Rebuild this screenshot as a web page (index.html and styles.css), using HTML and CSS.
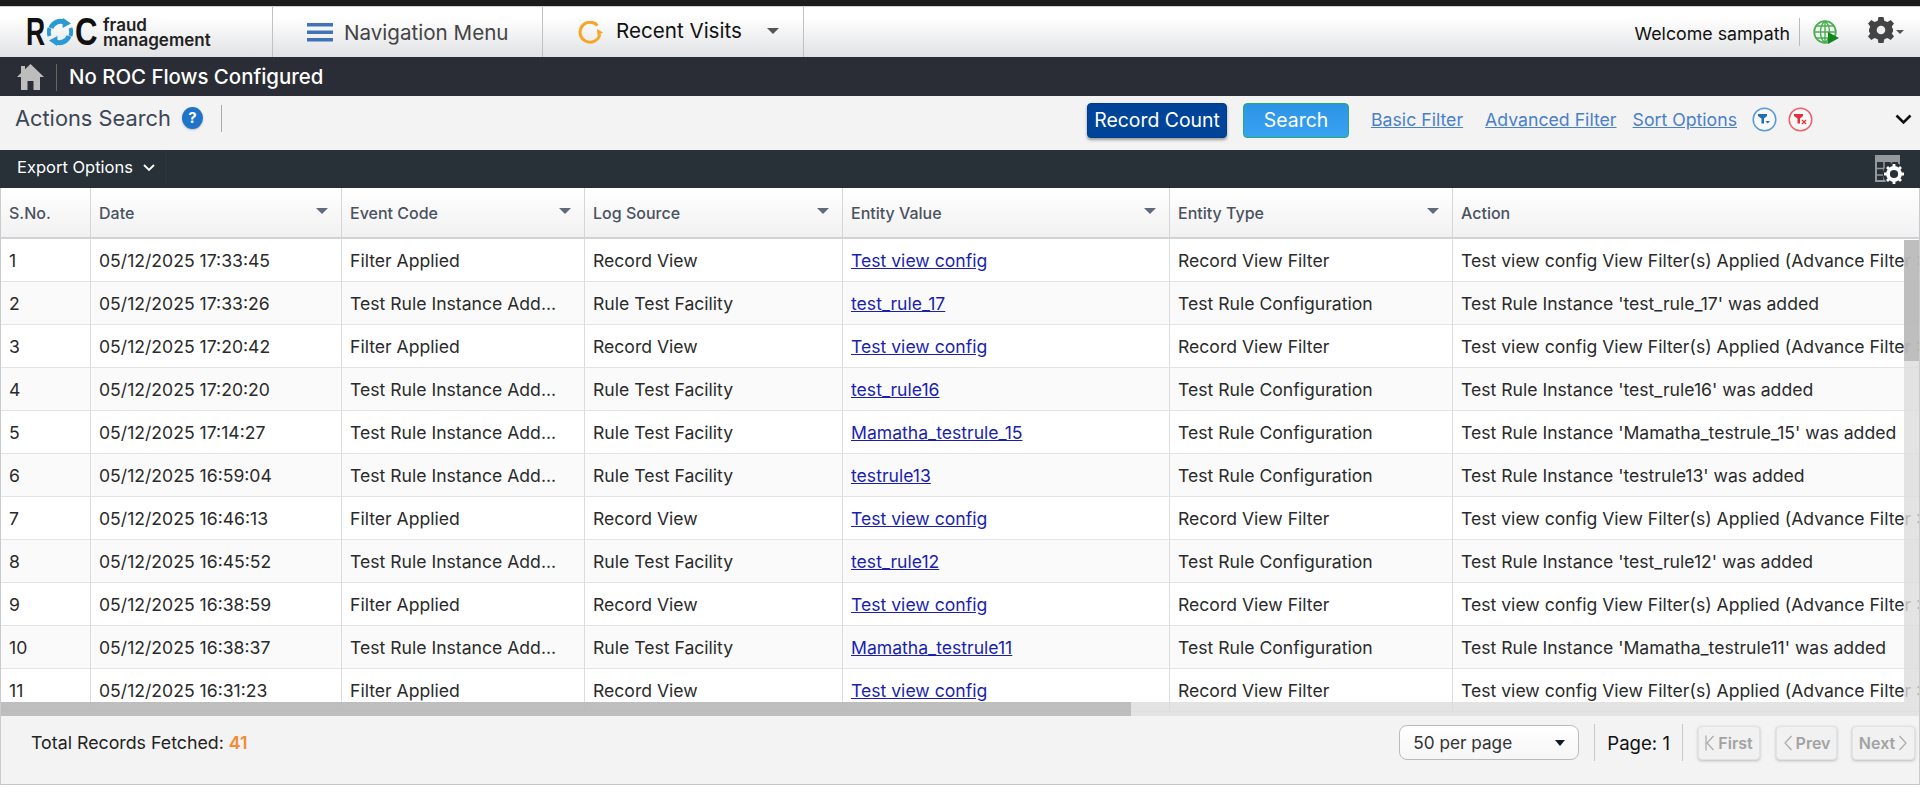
FILE: index.html
```html
<!DOCTYPE html>
<html>

<head>
    <meta name="viewport" content="width=device-width, initial-scale=1.0">
    <title>Actions Search</title>
    <link rel="stylesheet" href="styles.css">
</head>

<body>
    <div class="topline"></div>

    <header class="header">
        <div class="logo">
            <span class="logo-r">R</span>
            <svg class="logo-o" viewBox="0 0 26 28">
                <path d="M4 10A10 10 0 0 1 18 4.500" fill="none" stroke="#2a9ad6" stroke-width="5"/>
                <path d="M16 0L24 5.500L15.500 10Z" fill="#2a9ad6"/>
                <path d="M22 18A10 10 0 0 1 8 23.500" fill="none" stroke="#2a9ad6" stroke-width="5"/>
                <path d="M10 28L2 22.500L10.500 18Z" fill="#2a9ad6"/>
                <path d="M2.600 18A11 11 0 0 1 2.600 10M23.400 10A11 11 0 0 1 23.400 18" fill="none" stroke="#2a9ad6" stroke-width="4"/>
            </svg>
            <span class="logo-c">C</span>
            <span class="logo-text">fraud<br>management</span>
        </div>
        <div class="nav-item nav-menu">
            <svg class="hamburger" viewBox="0 0 26 19">
                <rect y="0" width="26" height="3.500" fill="#3f72b8"/>
                <rect y="7.500" width="26" height="3.500" fill="#3f72b8"/>
                <rect y="15" width="26" height="3.500" fill="#3f72b8"/>
            </svg>
            Navigation Menu
        </div>
        <div class="nav-item nav-recent">
            <svg class="recent-icon" viewBox="0 0 25 23">
                <path d="M19.500 4.500A10 10 0 1 0 21.800 13.500" fill="none" stroke="#f6a623" stroke-width="3"/>
                <path d="M19 8L25 11.500L19.500 14.500Z" fill="#f6a623"/>
            </svg>
            <span class="recent-text">Recent Visits</span>
            <span class="caret"></span>
        </div>
        <div class="header-right">
            <span class="welcome">Welcome sampath</span>
            <span class="vline"></span>
            <svg class="globe" viewBox="0 0 26 25">
                <circle cx="12" cy="12" r="10.800" fill="none" stroke="#4aae52" stroke-width="1.800"/>
                <path d="M1 12H23M3 6H21M3 18H21M12 1V23M12 1C6 6 6 18 12 23M12 1C18 6 18 18 12 23" fill="none" stroke="#4aae52" stroke-width="1.400"/>
                <path d="M15 12L26 18L15 24Z" fill="#12851c"/>
            </svg>
            <svg class="gear" viewBox="0 0 26 26">
                <path d="M10.500 0H15.500L16.300 3.700L19.500 5L22.700 3L26 6.500L23.800 9.600L25 12.500V14.500L23.800 16.400L26 19.500L22.700 23L19.500 21L16.300 22.300L15.500 26H10.500L9.700 22.300L6.500 21L3.300 23L0 19.500L2.200 16.400L1 14.500V12.500L2.200 9.600L0 6.500L3.300 3L6.500 5L9.700 3.700Z" fill="#444"/>
                <circle cx="13" cy="13" r="4.300" fill="#eeeff0"/>
            </svg>
            <span class="caret caret-small"></span>
        </div>
    </header>

    <div class="flowbar">
        <svg class="home" viewBox="0 0 27 26">
            <path d="M13.500 0L27 13H23V26H16.500V17H10.500V26H4V13H0L4 9V2H8V5.200Z" fill="#bdbdbd"/>
        </svg>
        <span class="flowbar-line"></span>
        <span class="flow-title">No ROC Flows Configured</span>
    </div>

    <div class="actionbar">
        <div class="page-title">
            <span>Actions Search</span>
            <span class="help">?</span>
            <span class="title-line"></span>
        </div>
        <div class="actions">
            <button class="btn btn-count">Record Count</button>
            <button class="btn btn-search">Search</button>
            <a class="filter-link link-basic" href="#">Basic Filter</a>
            <a class="filter-link link-advanced" href="#">Advanced Filter</a>
            <a class="filter-link link-sort" href="#">Sort Options</a>
            <svg class="filter-icon icon-blue" viewBox="0 0 25 25">
                <circle cx="12.500" cy="12.500" r="11.300" fill="#f8f8f8" stroke="#5a9bd5" stroke-width="1.500"/>
                <path d="M6 7H15V9L12 11.500V16.500H9.500V11.500L6 9Z" fill="#1d6fb5"/>
                <path d="M13.500 14H18L15.700 16.500Z" fill="#1d6fb5"/>
            </svg>
            <svg class="filter-icon icon-red" viewBox="0 0 25 25">
                <circle cx="12.500" cy="12.500" r="11.300" fill="#f8f8f8" stroke="#f0606a" stroke-width="1.500"/>
                <path d="M6 7H15V9L12 11.500V16.500H9.500V11.500L6 9Z" fill="#e0303c"/>
                <path d="M14 13L18 17M18 13L14 17" stroke="#e0303c" stroke-width="1.300"/>
            </svg>
            <svg class="chevron-dark" viewBox="0 0 17 11">
                <path d="M1.500 1.500L8.500 8.500L15.500 1.500" fill="none" stroke="#111" stroke-width="2.600"/>
            </svg>
        </div>
    </div>

    <div class="exportbar">
        <div class="export-btn">
            Export Options
            <svg class="export-chevron" viewBox="0 0 12 8">
                <path d="M1 1L6 6L11 1" fill="none" stroke="#fff" stroke-width="1.800"/>
            </svg>
        </div>
        <svg class="grid-gear" viewBox="0 0 30 29">
            <rect x="1" y="1" width="23" height="25" fill="none" stroke="#95999c" stroke-width="2"/>
            <rect x="1" y="1" width="23" height="6" fill="#95999c"/>
            <path d="M9 7V26M16.500 7V26M1 13.500H24M1 20H24" stroke="#95999c" stroke-width="1.500"/>
            <circle cx="19" cy="19" r="11" fill="#283038"/>
            <circle cx="19" cy="19" r="6" fill="none" stroke="#fff" stroke-width="3.800"/>
            <path d="M19 9V12M19 26V29M9 19H12M26 19H29M12 12L14 14M24 24L26 26M26 12L24 14M14 24L12 26" stroke="#fff" stroke-width="2.800"/>
        </svg>
    </div>

    <div class="panel">
        <div class="table-wrap">
            <table class="grid">
                <colgroup>
                    <col class="col-sno">
                    <col class="col-date">
                    <col class="col-event">
                    <col class="col-source">
                    <col class="col-value">
                    <col class="col-type">
                    <col class="col-action">
                </colgroup>
                <thead>
                    <tr>
                        <th>S.No.</th>
                        <th class="sortable">Date</th>
                        <th class="sortable">Event Code</th>
                        <th class="sortable">Log Source</th>
                        <th class="sortable">Entity Value</th>
                        <th class="sortable">Entity Type</th>
                        <th>Action</th>
                    </tr>
                </thead>
                <tbody>
                    <tr><td>1</td><td>05/12/2025 17:33:45</td><td>Filter Applied</td><td>Record View</td><td><a href="#">Test view config</a></td><td>Record View Filter</td><td>Test view config View Filter(s) Applied (Advance Filter : Test view config)</td></tr>
                    <tr><td>2</td><td>05/12/2025 17:33:26</td><td>Test Rule Instance Add...</td><td>Rule Test Facility</td><td><a href="#">test_rule_17</a></td><td>Test Rule Configuration</td><td>Test Rule Instance 'test_rule_17' was added</td></tr>
                    <tr><td>3</td><td>05/12/2025 17:20:42</td><td>Filter Applied</td><td>Record View</td><td><a href="#">Test view config</a></td><td>Record View Filter</td><td>Test view config View Filter(s) Applied (Advance Filter : Test view config)</td></tr>
                    <tr><td>4</td><td>05/12/2025 17:20:20</td><td>Test Rule Instance Add...</td><td>Rule Test Facility</td><td><a href="#">test_rule16</a></td><td>Test Rule Configuration</td><td>Test Rule Instance 'test_rule16' was added</td></tr>
                    <tr><td>5</td><td>05/12/2025 17:14:27</td><td>Test Rule Instance Add...</td><td>Rule Test Facility</td><td><a href="#">Mamatha_testrule_15</a></td><td>Test Rule Configuration</td><td>Test Rule Instance 'Mamatha_testrule_15' was added</td></tr>
                    <tr><td>6</td><td>05/12/2025 16:59:04</td><td>Test Rule Instance Add...</td><td>Rule Test Facility</td><td><a href="#">testrule13</a></td><td>Test Rule Configuration</td><td>Test Rule Instance 'testrule13' was added</td></tr>
                    <tr><td>7</td><td>05/12/2025 16:46:13</td><td>Filter Applied</td><td>Record View</td><td><a href="#">Test view config</a></td><td>Record View Filter</td><td>Test view config View Filter(s) Applied (Advance Filter : Test view config)</td></tr>
                    <tr><td>8</td><td>05/12/2025 16:45:52</td><td>Test Rule Instance Add...</td><td>Rule Test Facility</td><td><a href="#">test_rule12</a></td><td>Test Rule Configuration</td><td>Test Rule Instance 'test_rule12' was added</td></tr>
                    <tr><td>9</td><td>05/12/2025 16:38:59</td><td>Filter Applied</td><td>Record View</td><td><a href="#">Test view config</a></td><td>Record View Filter</td><td>Test view config View Filter(s) Applied (Advance Filter : Test view config)</td></tr>
                    <tr><td>10</td><td>05/12/2025 16:38:37</td><td>Test Rule Instance Add...</td><td>Rule Test Facility</td><td><a href="#">Mamatha_testrule11</a></td><td>Test Rule Configuration</td><td>Test Rule Instance 'Mamatha_testrule11' was added</td></tr>
                    <tr><td>11</td><td>05/12/2025 16:31:23</td><td>Filter Applied</td><td>Record View</td><td><a href="#">Test view config</a></td><td>Record View Filter</td><td>Test view config View Filter(s) Applied (Advance Filter : Test view config)</td></tr>
                </tbody>
            </table>
            <div class="scroll-v"><div class="scroll-v-thumb"></div></div>
            <div class="scroll-h"><div class="scroll-h-thumb"></div></div>
        </div>

        <footer class="pager">
            <div class="total">Total Records Fetched: <b>41</b></div>
            <div class="pager-right">
                <div class="per-page">50 per page<span class="caret caret-black"></span></div>
                <span class="pager-line"></span>
                <span class="page-no">Page: 1</span>
                <span class="pager-line"></span>
                <button class="page-btn btn-first">
                    <svg class="page-arrow" viewBox="0 0 9 16"><path d="M1 0.500V15.500M8.500 1L2 8L8.500 15" fill="none" stroke="#aaa" stroke-width="1.200"/></svg>First
                </button>
                <button class="page-btn btn-prev">
                    <svg class="page-arrow" viewBox="0 0 9 16"><path d="M8.500 1L2 8L8.500 15" fill="none" stroke="#aaa" stroke-width="1.200"/></svg>Prev
                </button>
                <button class="page-btn btn-next">
                    Next<svg class="page-arrow" viewBox="0 0 9 16"><path d="M0.500 1L7 8L0.500 15" fill="none" stroke="#aaa" stroke-width="1.200"/></svg>
                </button>
            </div>
        </footer>
    </div>
</body>

</html>
```

FILE: styles.css
```css
* {
    box-sizing: border-box;
}

body {
    margin: 0;
    background: #fff;
    color: #222;
    font-family: Inter, "Liberation Sans", sans-serif;
    font-size: 15px;
}

.topline {
    height: 7px;
    background: #1c1c1c;
    border-bottom: 1px solid #d0d0d0;
}

/* header */
.header {
    height: 50px;
    display: flex;
    align-items: stretch;
    background: linear-gradient(#fff 20%, #e1e2e4);
}

.logo {
    width: 273px;
    border-right: 1px solid #bfc1c4;
    display: flex;
    align-items: center;
    padding-left: 26px;
    color: #111;
}

.logo-r,
.logo-c {
    font-family: "Liberation Sans", sans-serif;
    font-size: 39px;
    font-weight: 700;
    line-height: 40px;
    display: inline-block;
}

.logo-r {
    width: 21px;
    transform: scaleX(0.68);
    transform-origin: left center;
}

.logo-c {
    width: 28px;
    transform: scaleX(0.8);
    transform-origin: left center;
}

.logo-o {
    width: 26px;
    height: 28px;
    margin-right: 2px;
}

.logo-text {
    font-size: 17px;
    line-height: 15px;
    font-weight: 600;
    color: #222;
    margin-top: 2px;
}

.nav-item {
    display: flex;
    align-items: center;
    border-right: 1px solid #bfc1c4;
    font-size: 20.6px;
}

.nav-menu {
    width: 270px;
    padding-left: 34px;
    gap: 11px;
    color: #444;
}

.hamburger {
    width: 26px;
    height: 19px;
}

.nav-recent {
    width: 261px;
    padding-left: 35px;
    color: #111;
}

.recent-icon {
    width: 25px;
    height: 23px;
    margin-right: 13px;
}

.recent-text {
    margin-top: -4px;
}

.caret {
    display: inline-block;
    border-left: 6px solid transparent;
    border-right: 6px solid transparent;
    border-top: 6px solid #555;
}

.nav-recent .caret {
    margin-left: 25px;
    margin-top: -3px;
}

.header-right {
    margin-left: auto;
    display: flex;
    align-items: center;
    padding-right: 16px;
}

.welcome {
    font-size: 17.8px;
    color: #111;
    margin-top: 3px;
}

.vline {
    width: 1px;
    height: 28px;
    background: #bbb;
    margin: 0 13px 0 9px;
}

.globe {
    width: 26px;
    height: 25px;
    margin-right: 29px;
}

.gear {
    width: 26px;
    height: 26px;
    margin-top: -5px;
}

.caret-small {
    border-left-width: 4px;
    border-right-width: 4px;
    border-top-width: 4px;
    margin-left: 2px;
}

/* flow bar */
.flowbar {
    height: 39px;
    background: #2a2d36;
    display: flex;
    align-items: center;
    padding-left: 17px;
}

.home {
    width: 27px;
    height: 26px;
}

.flowbar-line {
    width: 1px;
    height: 27px;
    background: #666;
    margin: 2px 12px 0 12px;
}

.flow-title {
    color: #fff;
    font-size: 20.4px;
    font-weight: 500;
}

/* title and filters */
.actionbar {
    height: 54px;
    background: #f3f3f3;
    display: flex;
    justify-content: space-between;
}

.page-title {
    display: flex;
    align-items: center;
    height: 44px;
    padding-left: 15px;
    font-size: 21.8px;
    color: #3b4656;
}

.help {
    width: 21px;
    height: 22px;
    margin-left: 11px;
    border-radius: 50%;
    background: #1f74c9;
    color: #fff;
    font-size: 15px;
    font-weight: 700;
    line-height: 22px;
    text-align: center;
    box-shadow: 0 1px 2px #bbb;
}

.title-line {
    width: 1px;
    height: 27px;
    background: #aaa;
    margin-left: 18px;
}

.actions {
    display: flex;
    align-items: center;
    height: 54px;
    padding: 0 8px 6px 0;
}

.btn {
    height: 35px;
    border-radius: 4px;
    color: #fff;
    font-family: inherit;
    font-size: 19.4px;
    padding: 0;
}

.btn-count {
    width: 140px;
    background: #004499;
    border: 1px solid #003d8c;
    box-shadow: 0 2px 3px #999;
}

.btn-search {
    width: 106px;
    margin-left: 16px;
    background: linear-gradient(#2c94e4, #38a2f2);
    border: 1px solid #22ae6a;
}

.filter-link {
    color: #4a7fc9;
    font-size: 17.7px;
    margin-bottom: 2px;
}

.link-basic {
    margin-left: 22px;
}

.link-advanced {
    margin-left: 22px;
}

.link-sort {
    margin-left: 16px;
}

.filter-icon {
    width: 25px;
    height: 25px;
    margin-bottom: 2px;
}

.icon-blue {
    margin-left: 15px;
}

.icon-red {
    margin-left: 11px;
}

.chevron-dark {
    width: 17px;
    height: 11px;
    margin-left: 82px;
    margin-bottom: 2px;
}

/* export bar */
.exportbar {
    height: 38px;
    background: #283038;
    display: flex;
    justify-content: space-between;
    align-items: center;
    padding-right: 15px;
}

.export-btn {
    width: 166px;
    height: 34px;
    margin-bottom: 4px;
    border-right: 1px solid #2c353d;
    display: flex;
    align-items: center;
    gap: 10px;
    padding-left: 17px;
    color: #fff;
    font-size: 16.5px;
}

.export-chevron {
    width: 12px;
    height: 8px;
    margin-top: 2px;
}

.grid-gear {
    width: 30px;
    height: 29px;
}

/* table */
.panel {
    height: 597px;
    border-left: 1px solid #c8ccd0;
    border-right: 1px solid #c8ccd0;
    border-bottom: 1px solid #c4c7ca;
    background: #f3f3f3;
}

.table-wrap {
    position: relative;
    height: 528px;
    overflow: hidden;
    background: #fff;
}

.grid {
    width: 3205px;
    table-layout: fixed;
    border-collapse: separate;
    border-spacing: 0;
}

.col-sno {
    width: 90px;
}

.col-date {
    width: 251px;
}

.col-event {
    width: 243px;
}

.col-source {
    width: 258px;
}

.col-value {
    width: 327px;
}

.col-type {
    width: 283px;
}

.grid th {
    height: 51px;
    padding: 0 8px;
    text-align: left;
    font-size: 16px;
    font-weight: 500;
    color: #4a5260;
    background: linear-gradient(#fff, #f1f1f2);
    border-right: 1px solid #d4d6d8;
    border-bottom: 2px solid #d0d2d5;
}

.sortable {
    position: relative;
}

.sortable::after {
    content: "";
    position: absolute;
    right: 13px;
    top: 20px;
    border-left: 6px solid transparent;
    border-right: 6px solid transparent;
    border-top: 6px solid #5f6b7a;
}

.grid td {
    height: 43px;
    padding: 0 8px;
    font-size: 17.6px;
    color: #2a2a2a;
    white-space: nowrap;
    overflow: hidden;
    border-right: 1px solid #dcdcdc;
    border-bottom: 1px solid #e3e3e3;
}

.grid tbody tr:nth-child(even) td {
    background: #fafafa;
}

.grid a {
    color: #1a1fb0;
}

.scroll-v {
    position: absolute;
    top: 52px;
    right: 0;
    bottom: 0;
    width: 15px;
    background: rgba(220, 220, 220, 0.8);
}

.scroll-v-thumb {
    height: 121px;
    background: rgba(174, 174, 174, 0.7);
}

.scroll-h {
    position: absolute;
    left: 0;
    right: 15px;
    bottom: 0;
    height: 14px;
    background: rgba(220, 220, 220, 0.8);
}

.scroll-h-thumb {
    width: 1130px;
    height: 14px;
    background: rgba(174, 174, 174, 0.7);
}

/* pager */
.pager {
    height: 68px;
    display: flex;
    justify-content: space-between;
    align-items: center;
    padding: 0 4px 15px 30px;
    font-size: 17.8px;
}

.total {
    color: #222;
}

.total b {
    color: #f58b34;
    font-weight: 600;
}

.pager-right {
    display: flex;
    align-items: center;
}

.per-page {
    width: 180px;
    height: 35px;
    border: 1px solid #bbb;
    border-radius: 8px;
    background: linear-gradient(#fff, #f6f6f6);
    display: flex;
    justify-content: space-between;
    align-items: center;
    padding: 0 13px;
    color: #333;
    font-size: 17.2px;
}

.caret-black {
    border-top-color: #111827;
    border-left-width: 5px;
    border-right-width: 5px;
    border-top-width: 6px;
}

.pager-line {
    width: 1px;
    height: 37px;
    background: #c8c8c8;
}

.per-page + .pager-line {
    margin: 0 12px 0 15px;
}

.page-no {
    color: #111;
    font-size: 18.6px;
    margin-right: 12px;
}

.page-no + .pager-line {
    margin-right: 15px;
}

.page-btn {
    height: 34px;
    border: 1px solid #e2e2e2;
    border-radius: 4px;
    background: #f1f1f1;
    box-shadow: 0 1px 3px #bbb;
    color: #a2a2a2;
    font-family: inherit;
    font-size: 16px;
    font-weight: 600;
    padding: 0;
    display: flex;
    align-items: center;
    justify-content: center;
    gap: 4px;
}

.page-arrow {
    width: 9px;
    height: 16px;
}

.btn-first {
    width: 62px;
}

.btn-prev {
    width: 61px;
    margin-left: 16px;
}

.btn-next {
    width: 63px;
    margin-left: 15px;
}
```
